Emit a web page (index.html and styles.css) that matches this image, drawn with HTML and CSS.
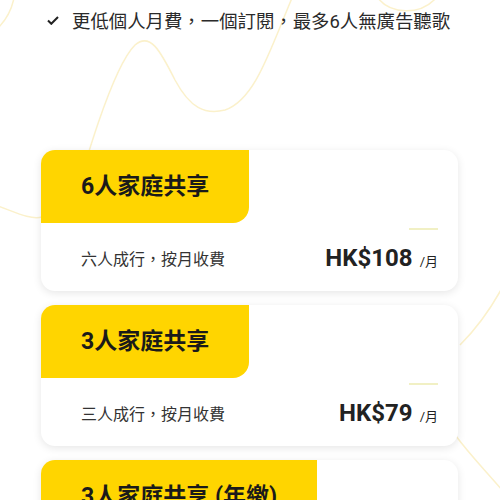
FILE: index.html
```html
<!DOCTYPE html>
<html lang="zh-HK">
<head>
  <meta charset="UTF-8" />
  <meta name="viewport" content="width=device-width, initial-scale=1.0" />
  <title>家庭共享方案</title>
  <link rel="stylesheet" href="styles.css">
</head>
<body>
  <!-- 背景線條 -->
  <svg class="bg-lines" viewBox="0 0 500 500" preserveAspectRatio="none">
    <path d="M-2 28 C8 18 12 8 14 -2" />
    <path d="M60 250 C80 180 110 70 135 45 C150 32 160 50 175 80 C190 108 205 115 225 110 C255 100 270 50 292 -2" />
    <path d="M378 -2 C390 14 420 16 436 -2" />
    <path d="M-2 206 C15 212 30 220 42 217" />
    <path d="M502 288 C490 310 475 330 460 345" />
    <path d="M456 436 C470 455 485 470 502 490" />
  </svg>

  <div class="feature">
    <svg class="check" viewBox="0 0 12 9">
      <path d="M1 4.5 L4.3 7.8 L11 1" />
    </svg>
    <span>更低個人月費，一個訂閱，最多6人無廣告聽歌</span>
  </div>

  <div class="plans">
    <div class="card">
      <div class="tab">6人家庭共享</div>
      <div class="card-body">
        <div class="accent"></div>
        <div class="row">
          <span class="desc">六人成行，按月收費</span>
          <span class="price">HK$108<small>/月</small></span>
        </div>
      </div>
    </div>

    <div class="card">
      <div class="tab">3人家庭共享</div>
      <div class="card-body">
        <div class="accent"></div>
        <div class="row">
          <span class="desc">三人成行，按月收費</span>
          <span class="price">HK$79<small>/月</small></span>
        </div>
      </div>
    </div>

    <div class="card">
      <div class="tab">3人家庭共享 (年繳)</div>
      <div class="card-body">
        <div class="accent"></div>
        <div class="row">
          <span class="desc">三人成行，一年收費</span>
          <span class="price">HK$790<small>/年</small></span>
        </div>
      </div>
    </div>
  </div>
</body>
</html>
```

FILE: styles.css
```css
body {
  font-family: Roboto, "Noto Sans CJK TC", sans-serif;
  background-color: #fff;
  margin: 0;
  height: 500px;
  overflow: hidden;
  position: relative;
  color: #222;
}
.bg-lines {
  position: absolute;
  top: 0;
  left: 0;
  width: 500px;
  height: 500px;
  z-index: 0;
}
.bg-lines path {
  fill: none;
  stroke: #fbf1cb;
  stroke-width: 1.5;
}
.feature {
  position: relative;
  display: flex;
  align-items: center;
  padding: 7px 0 0 47px;
  height: 26px;
  font-size: 18.4px;
  color: #2a2a2a;
}
.check {
  width: 12px;
  height: 9px;
  margin-right: 13px;
}
.check path {
  fill: none;
  stroke: #222;
  stroke-width: 2;
}
.plans {
  position: relative;
  display: flex;
  flex-direction: column;
  gap: 14px;
  padding: 117px 42px 0 41px;
}
.card {
  background: #fff;
  border-radius: 14px;
  overflow: hidden;
  box-shadow: 0 2px 8px rgba(0, 0, 0, 0.1);
}
.tab {
  display: inline-block;
  background-color: #ffd500;
  padding: 0 40px;
  height: 73px;
  line-height: 73px;
  font-size: 23px;
  font-weight: bold;
  color: #1a1a1a;
  border-bottom-right-radius: 16px;
}
.card-body {
  padding: 5px 20px 17px 40px;
}
.accent {
  width: 29px;
  height: 2px;
  margin-left: auto;
  background-color: #f1f0c4;
}
.row {
  display: flex;
  justify-content: space-between;
  align-items: center;
  height: 32px;
  margin-top: 12px;
}
.desc {
  font-size: 16px;
  color: #333;
}
.price {
  font-size: 24px;
  font-weight: bold;
  color: #222;
}
.price small {
  font-size: 13px;
  font-weight: normal;
  margin-left: 7px;
}
```
